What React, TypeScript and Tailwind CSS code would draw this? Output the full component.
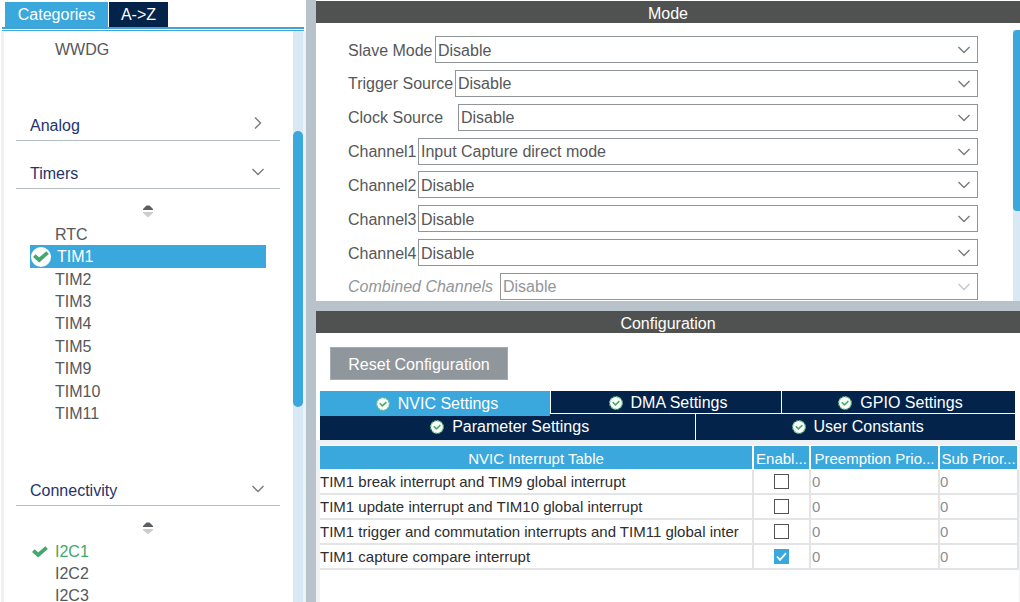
import { useState } from "react";

type Peripheral = { name: string; status?: "ok" };

const timers: Peripheral[] = [
  { name: "RTC" },
  { name: "TIM1" },
  { name: "TIM2" },
  { name: "TIM3" },
  { name: "TIM4" },
  { name: "TIM5" },
  { name: "TIM9" },
  { name: "TIM10" },
  { name: "TIM11" },
];

const buses: Peripheral[] = [{ name: "I2C1", status: "ok" }, { name: "I2C2" }, { name: "I2C3" }];

const modes = [
  { id: "slave", label: "Slave Mode", value: "Disable", width: "w-[87px]" },
  { id: "trigger", label: "Trigger Source", value: "Disable", width: "w-[107px]" },
  { id: "clock", label: "Clock Source", value: "Disable", width: "w-[110px]" },
  { id: "ch1", label: "Channel1", value: "Input Capture direct mode", width: "w-[70px]" },
  { id: "ch2", label: "Channel2", value: "Disable", width: "w-[70px]" },
  { id: "ch3", label: "Channel3", value: "Disable", width: "w-[70px]" },
  { id: "ch4", label: "Channel4", value: "Disable", width: "w-[70px]" },
  { id: "combined", label: "Combined Channels", value: "Disable", width: "w-[152px]", disabled: true },
];

const interrupts = [
  { name: "TIM1 break interrupt and TIM9 global interrupt", on: false },
  { name: "TIM1 update interrupt and TIM10 global interrupt", on: false },
  { name: "TIM1 trigger and commutation interrupts and TIM11 global inter", on: false },
  { name: "TIM1 capture compare interrupt", on: true },
];

const columns = [
  { title: "NVIC Interrupt Table", align: "text-center" },
  { title: "Enabl...", align: "text-center" },
  { title: "Preemption Prio...", align: "text-center" },
  { title: "Sub Prior...", align: "text-center" },
];

function Chevron({ className }: { className: string }) {
  return (
    <svg viewBox="0 0 12 8" className={className} fill="none" stroke="currentColor" strokeWidth="1.4">
      <path d="M0.5 1 L6 6.5 L11.5 1" />
    </svg>
  );
}

function Tick({ className }: { className: string }) {
  return (
    <svg viewBox="0 0 16 12" className={className} fill="none" stroke="#43a86b" strokeWidth="3.8">
      <path d="M1.3 4.6 L6.2 9 L14.6 1.6" />
    </svg>
  );
}

function StatusIcon() {
  return (
    <svg viewBox="0 0 14 14" className="h-3.5 w-3.5 shrink-0">
      <circle cx="7" cy="7" r="6.3" fill="#fbfffb" stroke="#6cbd88" strokeWidth="1.2" strokeDasharray="2.4 0.8" />
      <path d="M3.8 6.2 L6.4 8.8 L10.4 5.2" fill="none" stroke="#4aa86a" strokeWidth="1.6" />
    </svg>
  );
}

function Sorter() {
  return (
    <svg viewBox="0 0 10 14" className="mx-auto h-3.5 w-2.5">
      <path d="M0 6 V5 L3.5 1.5 H6.5 L10 5 V6 Z" fill="#5c5f61" />
      <path d="M0 8 V9 L3.5 12 L5 13.5 L6.5 12 L10 9 V8 Z" fill="#cacccd" />
    </svg>
  );
}

function GroupHeader({ title, open }: { title: string; open: boolean }) {
  return (
    <button
      type="button"
      aria-expanded={open}
      className="flex h-[30px] w-full items-center justify-between border-b border-[#b3bdc4] pr-4 pl-3.5 text-[#25336b]"
    >
      <span>{title}</span>
      <Chevron className={open ? "mb-1 h-2 w-3 text-[#777b7e]" : "mb-1.5 h-2 w-3 -rotate-90 text-[#777b7e]"} />
    </button>
  );
}

function PeripheralItem({ item, selected, onSelect }: { item: Peripheral; selected: boolean; onSelect: () => void }) {
  const colour = selected ? "bg-[#3aa8dc] text-white" : item.status === "ok" ? "text-[#43a86b]" : "text-[#55585a]";
  return (
    <li className="grid">
      <button type="button" onClick={onSelect} className={`flex items-center pt-px text-left ${colour}`}>
        <span className={selected ? "flex w-[27px] shrink-0 pl-px" : "flex w-[25px] shrink-0 pl-0.5"}>
          {selected && (
            <span className="flex size-5 items-center justify-center rounded-full bg-white">
              <Tick className="h-3 w-4" />
            </span>
          )}
          {!selected && item.status === "ok" && <Tick className="h-3 w-4" />}
        </span>
        {item.name}
      </button>
    </li>
  );
}

function PanelTitle({ children }: { children: string }) {
  return <h2 className="flex h-[22px] shrink-0 items-center justify-center bg-[#505251] pt-1 text-white">{children}</h2>;
}

function SettingsTab({ label, active, className }: { label: string; active?: boolean; className: string }) {
  return (
    <button type="button" role="tab" aria-selected={!!active} className={`flex items-center justify-center gap-2 pl-1 text-white ${className}`}>
      <StatusIcon />
      {label}
    </button>
  );
}

export default function App() {
  const [selected, setSelected] = useState("TIM1");
  const [enabled, setEnabled] = useState(interrupts.map((i) => i.on));

  return (
    <div className="flex h-screen overflow-hidden bg-white font-['Liberation_Sans',Arial,sans-serif] text-[16px] leading-5">
      <aside className="flex w-[30%] shrink-0 flex-col pt-0.5">
        <div role="tablist" className="flex h-[25px] shrink-0 gap-px pl-[5px]">
          <button type="button" role="tab" aria-selected className="w-[103px] bg-[#3aa8dc] text-white">
            Categories
          </button>
          <button type="button" role="tab" aria-selected={false} className="w-[59px] bg-[#03234b] text-white">
            A-&gt;Z
          </button>
        </div>
        <div className="mr-0.5 ml-0.5 h-1 shrink-0 border-t-2 border-b border-t-[#4b9fcd] border-b-[#3aa8dc]" />
        <div className="ml-px flex min-h-0 flex-1 border-l-[3px] border-[#eff2f3]">
          <nav className="min-w-0 flex-1 overflow-hidden pr-[13px] pl-3">
            <p className="mt-[9px] ml-[39px] text-[#55585a]">WWDG</p>
            <div className="mt-[51px]">
              <GroupHeader title="Analog" open={false} />
            </div>
            <div className="mt-[18px]">
              <GroupHeader title="Timers" open />
              <div className="pt-[15px] pb-[5px]">
                <Sorter />
              </div>
              <ul className="mr-3.5 ml-3.5 grid h-[202px] auto-rows-fr">
                {timers.map((t) => (
                  <PeripheralItem key={t.name} item={t} selected={t.name === selected} onSelect={() => setSelected(t.name)} />
                ))}
              </ul>
            </div>
            <div className="mt-[51px]">
              <GroupHeader title="Connectivity" open />
              <div className="pt-[15px] pb-[5px]">
                <Sorter />
              </div>
              <ul className="mr-3.5 ml-3.5 grid h-[67px] auto-rows-fr">
                {buses.map((b) => (
                  <PeripheralItem key={b.name} item={b} selected={b.name === selected} onSelect={() => setSelected(b.name)} />
                ))}
              </ul>
            </div>
          </nav>
          <div className="w-2.5 shrink-0 bg-[#d9e8f5] pt-[100px]">
            <div className="h-[276px] rounded-full bg-[#3aa8dc]" />
          </div>
          <div className="w-[3px] shrink-0 bg-[#ecf3f6]" />
        </div>
      </aside>

      <div className="w-2.5 shrink-0 bg-[#b7c2ca]" />

      <main className="flex min-w-0 flex-1 flex-col">
        <section className="flex shrink-0 flex-col pt-px">
          <PanelTitle>Mode</PanelTitle>
          <div className="flex h-[278px]">
            <form className="mt-[13px] mr-[35px] ml-8 flex h-[264px] min-w-0 flex-1 flex-col justify-between">
              {modes.map((m) => (
                <div key={m.id} className="flex h-[27px] items-center">
                  <label
                    htmlFor={m.id}
                    className={`shrink-0 whitespace-nowrap pt-0.5 ${m.width} ${m.disabled ? "text-[#929699] italic" : "text-[#55585a]"}`}
                  >
                    {m.label}
                  </label>
                  <div className="relative h-full min-w-0 flex-1">
                    <select
                      id={m.id}
                      disabled={m.disabled}
                      className="h-full w-full appearance-none border border-[#8f9599] bg-white pt-0.5 pl-0.5 text-[#55585a] disabled:text-[#929699] disabled:opacity-100"
                    >
                      <option>{m.value}</option>
                    </select>
                    <Chevron
                      className={`pointer-events-none absolute top-2.5 right-2 h-2 w-3 ${m.disabled ? "text-[#c4c7c9]" : "text-[#777b7e]"}`}
                    />
                  </div>
                </div>
              ))}
            </form>
            <div className="w-[7px] shrink-0 overflow-hidden bg-[#d9e8f5]">
              <div className="h-[7px] bg-white" />
              <div className="h-[181px] rounded-l bg-[#3aa8dc]" />
            </div>
          </div>
        </section>

        <div className="h-2.5 shrink-0 bg-[#b7c2ca]" />

        <section className="flex min-h-0 flex-1 flex-col">
          <PanelTitle>Configuration</PanelTitle>
          <div className="pt-3.5 pb-[11px] pl-3.5">
            <button type="button" className="h-[33px] w-[178px] border border-[#a5acb0] bg-[#8f969c] pt-0.5 text-white">
              Reset Configuration
            </button>
          </div>
          <div role="tablist" className="mr-[5px] ml-1 shrink-0">
            <div className="grid h-[23px] grid-cols-[230fr_230fr_233fr] items-start gap-px">
              <SettingsTab label="NVIC Settings" active className="relative z-10 h-[25px] bg-[#3aa8dc]" />
              <SettingsTab label="DMA Settings" className="h-[22px] bg-[#03234b] pt-0.5" />
              <SettingsTab label="GPIO Settings" className="h-[22px] bg-[#03234b] pt-0.5" />
            </div>
            <div className="flex h-[26px] gap-px">
              <SettingsTab label="Parameter Settings" className="w-[54%] bg-[#03234b]" />
              <SettingsTab label="User Constants" className="flex-1 bg-[#03234b]" />
            </div>
          </div>
          <div className="min-h-0 flex-1 border-t-[5px] border-r border-l-4 border-[#eff1f2] pt-px">
            <table className="w-full table-fixed border-separate border-spacing-0 text-[15px] whitespace-nowrap">
              <colgroup>
                <col />
                <col className="w-[57px]" />
                <col className="w-[129px]" />
                <col className="w-[79px]" />
              </colgroup>
              <thead>
                <tr className="h-6">
                  {columns.map((c) => (
                    <th
                      key={c.title}
                      className={`overflow-hidden border-r-2 border-b border-white bg-[#3aa8dc] p-0 pt-0.5 font-normal text-white ${c.align}`}
                    >
                      {c.title}
                    </th>
                  ))}
                </tr>
              </thead>
              <tbody>
                {interrupts.map((row, i) => (
                  <tr key={row.name} className="h-[25px]">
                    <td className="overflow-hidden border-r-2 border-b-2 border-[#e2e4e6] p-0 text-[#2c2e30]">{row.name}</td>
                    <td className="border-r-2 border-b-2 border-[#e2e4e6] p-0">
                      <label className="relative flex h-[23px] items-center justify-center">
                        <input
                          type="checkbox"
                          aria-label={`Enable ${row.name}`}
                          checked={enabled[i]}
                          onChange={() => setEnabled(enabled.map((v, k) => (k === i ? !v : v)))}
                          className="size-[15px] appearance-none border border-[#505254] bg-white checked:border-[#3aa8dc] checked:bg-[#3aa8dc]"
                        />
                        {enabled[i] && (
                          <svg viewBox="0 0 15 15" className="pointer-events-none absolute size-[15px]" fill="none" stroke="white" strokeWidth="1.8">
                            <path d="M3 7.5 L6 10.8 L12 4.2" />
                          </svg>
                        )}
                      </label>
                    </td>
                    <td className="border-r-2 border-b-2 border-[#e2e4e6] p-0 pl-px text-[#8b8f92]">0</td>
                    <td className="border-r-2 border-b-2 border-[#e2e4e6] p-0 text-[#8b8f92]">0</td>
                  </tr>
                ))}
              </tbody>
            </table>
          </div>
        </section>
      </main>
    </div>
  );
}
